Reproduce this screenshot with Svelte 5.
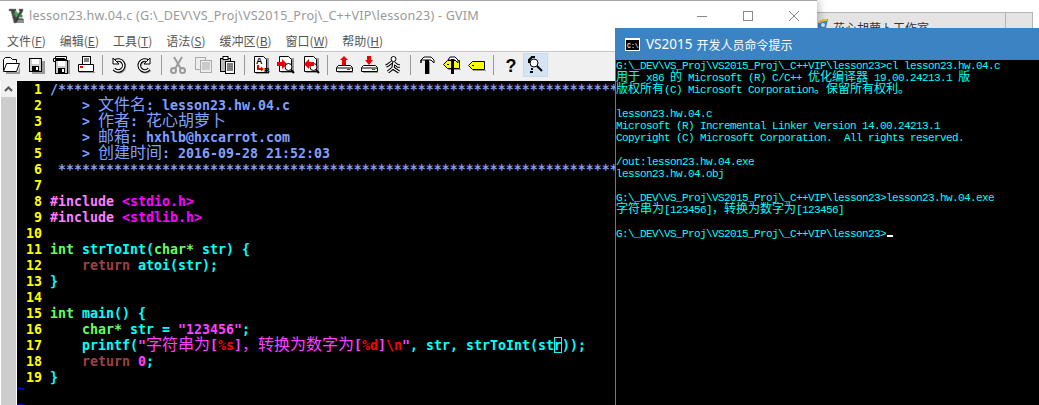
<script>
  const STARS1 = '/' + '*'.repeat(90);
  const STARS6 = ' ' + '*'.repeat(90);

  // [css class, text]
  const lines = [
    [['cm', STARS1]],
    [['cm', '    > 文件名: lesson23.hw.04.c']],
    [['cm', '    > 作者: 花心胡萝卜']],
    [['cm', '    > 邮箱: hxhlb@hxcarrot.com']],
    [['cm', '    > 创建时间: 2016-09-28 21:52:03']],
    [['cm', STARS6]],
    [],
    [['pp', '#include '], ['inc', '<stdio.h>']],
    [['pp', '#include '], ['inc', '<stdlib.h>']],
    [],
    [['ty', 'int'], ['id', ' strToInt('], ['ty', 'char*'], ['id', ' str) {']],
    [['id', '    '], ['kw', 'return'], ['id', ' atoi(str);']],
    [['id', '}']],
    [],
    [['ty', 'int'], ['id', ' main() {']],
    [['id', '    '], ['ty', 'char*'], ['id', ' str = '], ['st', '"123456"'], ['id', ';']],
    [['id', '    printf('], ['st', '"字符串为['], ['sp', '%s'], ['st', ']，转换为数字为['], ['sp', '%d'], ['st', ']'], ['sp', '\\n'], ['st', '"'], ['id', ', str, strToInt(st'], ['cur', 'r'], ['id', '));']],
    [['id', '    '], ['kw', 'return'], ['id', ' '], ['st', '0'], ['id', ';']],
    [['id', '}']]
  ];

  const consoleLines = [
    'G:\\_DEV\\VS_Proj\\VS2015_Proj\\_C++VIP\\lesson23>cl lesson23.hw.04.c',
    '用于 x86 的 Microsoft (R) C/C++ 优化编译器 19.00.24213.1 版',
    '版权所有(C) Microsoft Corporation。保留所有权利。',
    '',
    'lesson23.hw.04.c',
    'Microsoft (R) Incremental Linker Version 14.00.24213.1',
    'Copyright (C) Microsoft Corporation.  All rights reserved.',
    '',
    '/out:lesson23.hw.04.exe',
    'lesson23.hw.04.obj',
    '',
    'G:\\_DEV\\VS_Proj\\VS2015_Proj\\_C++VIP\\lesson23>lesson23.hw.04.exe',
    '字符串为[123456]，转换为数字为[123456]',
    '',
    'G:\\_DEV\\VS_Proj\\VS2015_Proj\\_C++VIP\\lesson23>'
  ];

  const menus = [['文件', 'F'], ['编辑', 'E'], ['工具', 'T'], ['语法', 'S'], ['缓冲区', 'B'], ['窗口', 'W'], ['帮助', 'H']];

  const cjk = /([\u3000-\u9fff\uff00-\uffef]+)/;
  const split = (t) => t.split(cjk).filter(Boolean).map((s) => ({ s, z: cjk.test(s) }));

  const doc = (x, y, w, h) => `<rect x="${x + 2}" y="${y + 2}" width="${w + 1}" height="${h}" fill="#999"/><path d="M${x}.5 ${y}.5h${w - 3}l3 3v${h - 3}h-${w}z" fill="#fff" stroke="#000"/>`;
  const floppy = (x, y) => `<rect x="${x}.5" y="${y}.5" width="12" height="13" fill="#ccc" stroke="#000"/><rect x="${x + 3}" y="${y + 1}" width="7" height="5" fill="#fff"/><rect x="${x + 3}" y="${y + 8}" width="7" height="5" fill="#000"/><rect x="${x + 7}" y="${y + 9}" width="2" height="3" fill="#fff"/>`;
  const disk = '<path d="M1.5 11.5l2-2h12l2 2v4h-16z" fill="#fff" stroke="#000"/><path d="M2 12h15" stroke="#000"/><rect x="3" y="16" width="15" height="1" fill="#999"/><rect x="12" y="13" width="3" height="1" fill="#e00"/>';
  const mag = '<circle cx="11.5" cy="11" r="3.5" fill="#fff" stroke="#000"/><path d="M14 14l3 3" stroke="#000" stroke-width="2"/>';
  const tag = (x, y) => `<path d="M${x + 4}.5 ${y}.5h12v8h-12l-4-4z" fill="#ff0" stroke="#000"/><rect x="${x + 4}" y="${y + 4}" width="2" height="1" fill="#000"/><rect x="${x + 5}" y="${y + 9}" width="13" height="1" fill="#999"/>`;
  const arc = (d) => `<path d="${d}" stroke="#999" stroke-width="3" fill="none" transform="translate(1 1)"/><path d="${d}" stroke="#000" stroke-width="3.6" fill="none"/><path d="${d}" stroke="#fff" stroke-width="1.5" fill="none"/>`;
  const fig = 'M7 6L3 9l-2 1M9 6l-1 6-5 4M8 12l6 4M9 7l4 3h2';

  const tools = [
    { i: '<path d="M4 17h13l2-7" stroke="#999" stroke-width="2" fill="none"/><path d="M1.5 14.5v-11l2-2h5l2 2h4v3" fill="#fff" stroke="#000"/><path d="M1.5 15.5l3-8h13l-3 8z" fill="#fff" stroke="#000"/>' },
    { i: `<rect x="5" y="5" width="13" height="13" fill="#999"/>${floppy(2, 2)}` },
    { i: `<rect x="4" y="4" width="14" height="14" fill="#999"/><path d="M3.5 .5h11v3h-11zM1.5 2.5h11v3h-11z" fill="#fff" stroke="#000"/>${floppy(3, 4)}` },
    { i: '<rect x="5.5" y=".5" width="8" height="8" fill="#fff" stroke="#000"/><path d="M7 3h5M7 5h5" stroke="#000"/><path d="M1.5 8.5h15v7h-15z" fill="#fff" stroke="#000"/><rect x="3" y="10" width="3" height="2" fill="#e00"/><rect x="2" y="16" width="16" height="1" fill="#999"/>' },
    { sep: true },
    { i: `${arc('M5 5a5.5 5.5 0 1 1-1 8')}<path d="M3 2v6h6z" fill="#fff" stroke="#000"/>` },
    { i: `${arc('M13 5a5.5 5.5 0 1 0 1 8')}<path d="M15 2v6H9z" fill="#fff" stroke="#000"/>` },
    { sep: true },
    { i: '<path d="M5 1l7 12M13 1l-7 12" stroke="#9a9a9a" stroke-width="2" fill="none"/><circle cx="4.5" cy="14.5" r="2.5" stroke="#9a9a9a" stroke-width="2" fill="none"/><circle cx="13.5" cy="14.5" r="2.5" stroke="#9a9a9a" stroke-width="2" fill="none"/>' },
    { i: '<rect x="1.5" y="1.5" width="10" height="12" fill="#eee" stroke="#aaa"/><rect x="6.5" y="4.5" width="11" height="12" fill="#eee" stroke="#aaa"/><path d="M8 7h8M8 9h8M8 11h8M8 13h8" stroke="#aaa"/>' },
    { i: '<rect x="2.5" y="2.5" width="10" height="13" fill="#bbb" stroke="#000"/><rect x="5" y=".5" width="5" height="3" fill="#fff" stroke="#000"/><rect x="7.5" y="5.5" width="9" height="12" fill="#fff" stroke="#000"/><path d="M9 8h6M9 10h6M9 12h6M9 14h6" stroke="#000"/>' },
    { sep: true },
    { i: `${doc(2, 0, 12, 16)}<text x="4" y="8" fill="#000" font-family="Liberation Sans" font-size="9" font-weight="700">A</text><path d="M6 9v4h4" stroke="#e00" stroke-width="2" fill="none"/><path d="M9 10.5l3 2.5-3 2.5z" fill="#e00"/><text x="12" y="17" fill="#000" font-family="Liberation Sans" font-size="8" font-weight="700">B</text>` },
    { i: `${doc(2, 0, 12, 15)}<path d="M0 6h5V3l5 5-5 5v-3H0z" fill="#e00"/>${mag}` },
    { i: `${doc(2, 0, 12, 15)}${mag}<path d="M12 6H7V3L2 8l5 5v-3h5z" fill="#e00"/>` },
    { sep: true },
    { i: `<path d="M9 0l4 4h-2v5H7V4H5z" fill="#e00"/>${disk}` },
    { i: `<path d="M7 0h4v4h2l-4 5-4-5h2z" fill="#e00"/>${disk}` },
    { i: `<circle cx="8.5" cy="3" r="2.5" fill="#fff" stroke="#000"/><path d="${fig}" stroke="#000" stroke-width="3.4" fill="none"/><path d="${fig}" stroke="#fff" stroke-width="1.3" fill="none"/>` },
    { sep: true },
    { i: '<path d="M3 7V4l3-3h7l3 3v3l-3-3H3z" fill="#fff" stroke="#000"/><rect x="7" y="4" width="4" height="14" fill="#000"/><rect x="11" y="6" width="1" height="12" fill="#999"/>' },
    { i: `${tag(0, 4)}<path d="M5 4l2-3h5l3 3v3l-3-3z" fill="#fff" stroke="#000"/><rect x="8" y="3" width="3" height="15" fill="#000"/>` },
    { i: tag(0, 5) },
    { sep: true },
    { i: '<text x="9" y="16" fill="#000" text-anchor="middle" font-family="Liberation Sans" font-size="18" font-weight="700">?</text>' },
    { i: '<circle cx="8" cy="7" r="4" fill="#fff" stroke="#000"/><path d="M11 10l5 5" stroke="#000" stroke-width="2"/><path d="M3 7V4l3-3h3M6 12v2M4 16h3" stroke="#000" stroke-width="2" fill="none"/>', on: true }
  ];
</script>

<div class="desk">
  <div class="other-tab">
    <svg class="tab-icon" viewBox="0 0 12 11" width="12" height="11">
      <path d="M1 10V5l3-3 7-1-2 9z" fill="#3c83c4"/>
      <path d="M2 5c2-3 5-3 8-3" stroke="#f0c020" stroke-width="2" fill="none"/>
      <circle cx="6" cy="7" r="2" fill="#cfe6f8"/>
    </svg>
    <span class="tab-name">花心胡萝卜工作室</span>
    <span class="tab-rest"></span>
  </div>

  <section class="vim">
    <header class="vim-title">
      <svg class="logo" viewBox="0 0 16 16" width="16" height="16">
        <path d="M1 1h7v2H7l1 6 4-6h-1V1h4v2l-7 12H6L3 3H1z" fill="#444" stroke="#888" stroke-width=".5"/>
        <path d="M5 6l3-3 3 3-3 3z" fill="#2a9a3a" opacity=".85"/>
        <path d="M13 6l2 2-2 2-2-2z" fill="#2a9a3a"/>
        <path d="M9 11v4M11 11v4M13 11v4M15 11v4M9 11h6" stroke="#222" fill="none"/>
      </svg>
      <span class="vim-name">lesson23.hw.04.c (G:\_DEV\VS_Proj\VS2015_Proj\_C++VIP\lesson23) - GVIM</span>
      <div class="win-btns">
        <svg viewBox="0 0 10 10" width="10" height="10"><path d="M0 5.5h10" stroke="#888"/></svg>
        <svg viewBox="0 0 10 10" width="10" height="10"><rect x=".5" y=".5" width="9" height="9" fill="none" stroke="#888"/></svg>
        <svg viewBox="0 0 10 10" width="10" height="10"><path d="M0 0l10 10M10 0L0 10" stroke="#888" fill="none"/></svg>
      </div>
    </header>

    <nav class="menu">
      {#each menus as [label, key]}
        <span class="menu-item">{label}(<u>{key}</u>)</span>
      {/each}
    </nav>

    <div class="toolbar">
      {#each tools as t}
        {#if t.sep}
          <span class="sep"></span>
        {:else}
          <span class="tool" class:on={t.on}>
            <svg viewBox="0 0 18 18" width="18" height="18" fill="none">{@html t.i}</svg>
          </span>
        {/if}
      {/each}
    </div>

    <div class="body">
      <div class="scroll">
        <span class="up">
          <svg viewBox="0 0 9 6" width="9" height="6"><path d="M1 5l3.5-3.5L8 5" stroke="#555" stroke-width="2" fill="none"/></svg>
        </span>
      </div>
      <div class="code">
        {#each lines as parts, n}
          <div class="row">
            <span class="num">{String(n + 1).padStart(3, ' ')} </span>{#each parts as [c, text]}<span class={c}>{#each split(text) as p}{#if p.z}<span class="z">{p.s}</span>{:else}{p.s}{/if}{/each}</span>{/each}
          </div>
        {/each}
        <div class="row tilde">~</div>
        <div class="row tilde">~</div>
      </div>
    </div>
  </section>

  <section class="cmd">
    <header class="cmd-title">
      <svg class="cmd-icon" viewBox="0 0 15 13" width="15" height="13">
        <rect width="15" height="13" fill="#fff"/>
        <rect x="1" y="2" width="13" height="10" fill="#000"/>
        <text x="2" y="9.5" font-family="Liberation Mono" font-size="6.5" font-weight="700" fill="#ddd">C:\</text>
      </svg>
      <span class="cmd-name">VS2015</span>
      <span class="cmd-zh">开发人员命令提示</span>
    </header>
    <div class="cmd-body">
      {#each consoleLines as l, i}
        <div class="cmd-row">{#each split(l) as p}{#if p.z}<span class="zc">{p.s}</span>{:else}{p.s}{/if}{/each}{#if i === consoleLines.length - 1}<span class="caret"></span>{/if}</div>
      {/each}
    </div>
  </section>
</div>

<style>
  :global(body) {
    margin: 0;
    background: #fff;
  }

  .desk {
    position: relative;
    width: 1039px;
    height: 405px;
    overflow: hidden;
    background: #fff;
  }

  /* window peeking out from behind */
  .other-tab {
    position: absolute;
    left: 810px;
    top: 12px;
    width: 223px;
    height: 30px;
    display: flex;
    align-items: flex-start;
    box-sizing: border-box;
    border: 1px solid #b4b4b4;
    background: #e4e4e4;
    padding-left: 6px;
  }

  .tab-icon {
    margin-top: 5px;
  }

  .tab-name {
    margin: 7px 0 0 4px;
    font: 12px/16px "Noto Sans CJK SC", sans-serif;
    color: #333;
  }

  .tab-rest {
    position: absolute;
    right: 0;
    top: 0;
    bottom: 0;
    width: 26px;
    border-left: 1px solid #b4b4b4;
  }

  .vim {
    position: absolute;
    left: 0;
    top: 0;
    width: 817px;
    height: 405px;
    display: flex;
    flex-direction: column;
    box-sizing: border-box;
    border-top: 1px solid #a6a6a6;
    background: #fff;
    box-shadow: 2px 0 8px rgba(0, 0, 0, 0.25);
  }

  .vim-title {
    height: 29px;
    display: flex;
    align-items: center;
    padding-left: 8px;
    flex: none;
  }

  .logo {
    margin-right: 5px;
  }

  .vim-name {
    font: 12.6px "Noto Sans", sans-serif;
    letter-spacing: 0.22px;
    color: #999;
    white-space: pre;
  }

  .win-btns {
    margin-left: auto;
    display: flex;
    gap: 36px;
    padding-right: 18px;
  }

  .menu {
    height: 21px;
    display: flex;
    align-items: center;
    gap: 14px;
    padding-left: 7px;
    flex: none;
    font: 12px "Noto Sans CJK SC", sans-serif;
    color: #555;
  }

  .toolbar {
    height: 30px;
    flex: none;
    display: flex;
    align-items: flex-start;
    box-sizing: border-box;
    border-top: 1px solid #c6c6c6;
    padding-top: 1px;
    background: #f0f0f0;
  }

  .tool {
    width: 24.8px;
    height: 24px;
    display: flex;
    align-items: center;
    justify-content: center;
    box-sizing: border-box;
    flex: none;
  }

  .tool:first-child {
    margin-left: -1px;
  }

  .tool.on {
    background: #d5e4f2;
    border: 1px solid #c4dcf0;
  }

  .sep {
    width: 1px;
    height: 20px;
    margin: 2px 3.91px 0;
    background: #999;
    flex: none;
  }

  .body {
    flex: 1;
    display: flex;
    min-height: 0;
  }

  .scroll {
    width: 15px;
    margin-left: 1px;
    margin-right: 1px;
    flex: none;
    background: #cdcdcd;
  }

  .up {
    height: 16px;
    display: flex;
    align-items: center;
    justify-content: center;
    background: #f0f0f0;
  }

  .code {
    flex: 1;
    min-width: 0;
    overflow: hidden;
    background: #000;
    font: 700 13.29px/18px "DejaVu Sans Mono", monospace;
  }

  .row {
    height: 16px;
    white-space: pre;
  }

  .num {
    color: #ff0;
  }

  .row > .num {
    display: inline-block;
    width: 33px;
    box-sizing: border-box;
    padding-left: 1px;
  }

  .z {
    font: 400 16px/0 "Noto Sans CJK SC", sans-serif;
  }

  .cm { color: #80a0ff; }
  .pp { color: #ff80ff; }
  .inc { color: #ff00ff; }
  .ty { color: #60ff60; }
  .id { color: #00ffff; }
  .kw { color: #a04040; }
  .st { color: #ff40ff; }
  .sp { color: #ff0000; }

  .cur {
    color: #00ffff;
    box-shadow: inset 0 0 0 1px #00ffff;
    display: inline-block;
    vertical-align: top;
    width: 8px;
    height: 16px;
  }

  .tilde {
    color: #0000ff;
    line-height: 8px;
  }

  .cmd {
    position: absolute;
    left: 615px;
    top: 28px;
    right: 0;
    bottom: 0;
    display: flex;
    flex-direction: column;
    box-sizing: border-box;
    border-left: 1px solid #3c83c4;
    background: #000;
  }

  .cmd-title {
    height: 32px;
    flex: none;
    display: flex;
    align-items: center;
    padding-left: 9px;
    background: #3c83c4;
    color: #fff;
  }

  .cmd-name {
    margin-left: 6px;
    font: 13.5px "Noto Sans", sans-serif;
  }

  .cmd-zh {
    margin-left: 4px;
    font: 12px "Noto Sans CJK SC", sans-serif;
  }

  .cmd-body {
    font: 11px/12px "Liberation Mono", monospace;
    letter-spacing: -0.6px;
    color: #00ffff;
  }

  .cmd-row {
    height: 12px;
    white-space: pre;
  }

  .zc {
    font: 12px/0 "Noto Sans CJK SC", sans-serif;
    letter-spacing: 0;
  }

  .caret {
    display: inline-block;
    width: 6px;
    height: 2px;
    margin-left: 1px;
    background: #fff;
  }
</style>
